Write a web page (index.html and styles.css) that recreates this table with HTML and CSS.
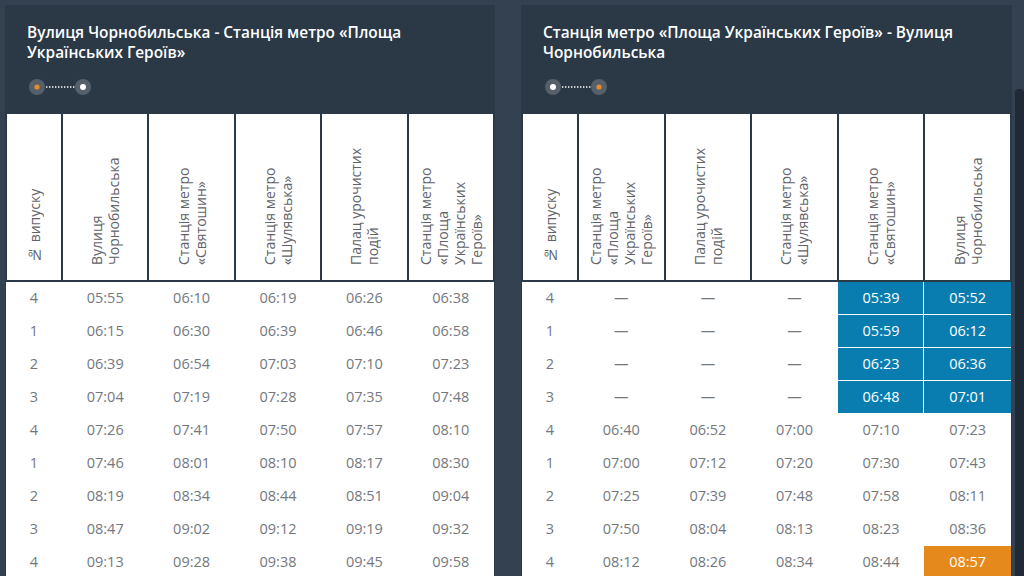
FILE: index.html
```html
<!DOCTYPE html>
<html lang="uk">
<head>
<meta charset="utf-8">
<title>Розклад</title>
<link rel="stylesheet" href="styles.css">
</head>
<body>
<div class="page">
  <section class="card">
    <header class="card-head">
      <h2 class="title">Вулиця Чорнобильська - Станція метро «Площа Українських Героїв»</h2>
      <svg class="route" width="62" height="18" viewBox="0 0 62 18">
        <circle cx="8" cy="9" r="8" fill="#56606b"/>
        <circle cx="8" cy="9" r="2.6" fill="#e8892b"/>
        <line x1="17" y1="9" x2="46" y2="9" stroke="#fff" stroke-width="1.4" stroke-dasharray="1.4 1.6"/>
        <circle cx="54" cy="9" r="8" fill="#56606b"/>
        <circle cx="54" cy="9" r="3" fill="#fff"/>
      </svg>
    </header>
    <table class="tt">
      <colgroup><col class="c-num"><col><col><col><col><col></colgroup>
      <thead>
        <tr>
          <th><div class="vt">№ випуску</div></th>
          <th><div class="vt">Вулиця Чорнобильська</div></th>
          <th><div class="vt">Станція метро «Святошин»</div></th>
          <th><div class="vt">Станція метро «Шулявська»</div></th>
          <th><div class="vt">Палац урочистих подій</div></th>
          <th><div class="vt">Станція метро «Площа Українських Героїв»</div></th>
        </tr>
      </thead>
      <tbody>
        <tr><td>4</td><td>05:55</td><td>06:10</td><td>06:19</td><td>06:26</td><td>06:38</td></tr>
        <tr><td>1</td><td>06:15</td><td>06:30</td><td>06:39</td><td>06:46</td><td>06:58</td></tr>
        <tr><td>2</td><td>06:39</td><td>06:54</td><td>07:03</td><td>07:10</td><td>07:23</td></tr>
        <tr><td>3</td><td>07:04</td><td>07:19</td><td>07:28</td><td>07:35</td><td>07:48</td></tr>
        <tr><td>4</td><td>07:26</td><td>07:41</td><td>07:50</td><td>07:57</td><td>08:10</td></tr>
        <tr><td>1</td><td>07:46</td><td>08:01</td><td>08:10</td><td>08:17</td><td>08:30</td></tr>
        <tr><td>2</td><td>08:19</td><td>08:34</td><td>08:44</td><td>08:51</td><td>09:04</td></tr>
        <tr><td>3</td><td>08:47</td><td>09:02</td><td>09:12</td><td>09:19</td><td>09:32</td></tr>
        <tr><td>4</td><td>09:13</td><td>09:28</td><td>09:38</td><td>09:45</td><td>09:58</td></tr>
      </tbody>
    </table>
  </section>

  <section class="card">
    <header class="card-head">
      <h2 class="title">Станція метро «Площа Українських Героїв» - Вулиця Чорнобильська</h2>
      <svg class="route" width="62" height="18" viewBox="0 0 62 18">
        <circle cx="8" cy="9" r="8" fill="#56606b"/>
        <circle cx="8" cy="9" r="3" fill="#fff"/>
        <line x1="17" y1="9" x2="46" y2="9" stroke="#fff" stroke-width="1.4" stroke-dasharray="1.4 1.6"/>
        <circle cx="54" cy="9" r="8" fill="#56606b"/>
        <circle cx="54" cy="9" r="2.6" fill="#e8892b"/>
      </svg>
    </header>
    <table class="tt">
      <colgroup><col class="c-num"><col><col><col><col><col></colgroup>
      <thead>
        <tr>
          <th><div class="vt">№ випуску</div></th>
          <th><div class="vt">Станція метро «Площа Українських Героїв»</div></th>
          <th><div class="vt">Палац урочистих подій</div></th>
          <th><div class="vt">Станція метро «Шулявська»</div></th>
          <th><div class="vt">Станція метро «Святошин»</div></th>
          <th><div class="vt">Вулиця Чорнобильська</div></th>
        </tr>
      </thead>
      <tbody>
        <tr><td>4</td><td>—</td><td>—</td><td>—</td><td class="hl hl-l">05:39</td><td class="hl">05:52</td></tr>
        <tr><td>1</td><td>—</td><td>—</td><td>—</td><td class="hl hl-l">05:59</td><td class="hl">06:12</td></tr>
        <tr><td>2</td><td>—</td><td>—</td><td>—</td><td class="hl hl-l">06:23</td><td class="hl">06:36</td></tr>
        <tr><td>3</td><td>—</td><td>—</td><td>—</td><td class="hl hl-l">06:48</td><td class="hl">07:01</td></tr>
        <tr><td>4</td><td>06:40</td><td>06:52</td><td>07:00</td><td>07:10</td><td>07:23</td></tr>
        <tr><td>1</td><td>07:00</td><td>07:12</td><td>07:20</td><td>07:30</td><td>07:43</td></tr>
        <tr><td>2</td><td>07:25</td><td>07:39</td><td>07:48</td><td>07:58</td><td>08:11</td></tr>
        <tr><td>3</td><td>07:50</td><td>08:04</td><td>08:13</td><td>08:23</td><td>08:36</td></tr>
        <tr><td>4</td><td>08:12</td><td>08:26</td><td>08:34</td><td>08:44</td><td class="now">08:57</td></tr>
      </tbody>
    </table>
  </section>
</div>
<div class="scroll-thumb"></div>
</body>
</html>
```

FILE: styles.css
```css
html, body {
  margin: 0;
  padding: 0;
}
body {
  background: #334150;
  height: 576px;
  overflow: hidden;
  font-family: "Open Sans", "Liberation Sans", sans-serif;
}
.page {
  display: flex;
  gap: 26px;
  padding: 5px 12px 0 5px;
  align-items: flex-start;
}
.card {
  width: 490px;
  flex: none;
  background: #2b3947;
}
.card + .card {
  width: 491px;
}
.card-head {
  padding: 18px 20px 16px 22px;
}
.title {
  margin: 0;
  color: #ffffff;
  font-size: 15.4px;
  line-height: 20px;
  font-weight: 600;
  letter-spacing: 0;
}
.route {
  display: block;
  margin-top: 15px;
  margin-left: 2px;
}
.tt {
  width: 100%;
  border-collapse: collapse;
  table-layout: fixed;
}
.c-num {
  width: 56px;
}
.tt th {
  background: #ffffff;
  border: 2px solid #2b3947;
  height: 151px;
  padding: 0 0 15px 0;
  vertical-align: bottom;
}
.vt {
  writing-mode: vertical-rl;
  transform: rotate(180deg);
  height: 124px;
  margin: 0 auto;
  text-align: left;
  font-size: 14px;
  line-height: 17px;
  font-weight: 400;
  color: #5f646b;
  white-space: normal;
}
.tt td {
  background: #ffffff;
  height: 31px;
  padding: 0 0 2px 0;
  text-align: center;
  font-size: 14.5px;
  font-weight: 400;
  color: #74787e;
}
.tt td.hl {
  background: #0a7db0;
  color: #ffffff;
  box-shadow: inset 0 -1px 0 #ffffff;
}
.tt td.hl-l {
  box-shadow: inset -1px -1px 0 #ffffff;
}
.tt td.now {
  background: #e6891d;
  color: #ffffff;
}
.scroll-thumb {
  position: fixed;
  right: 0;
  top: 89px;
  bottom: 0;
  width: 9px;
  background: #1f2a36;
  border-radius: 4px 4px 0 0;
}
```
